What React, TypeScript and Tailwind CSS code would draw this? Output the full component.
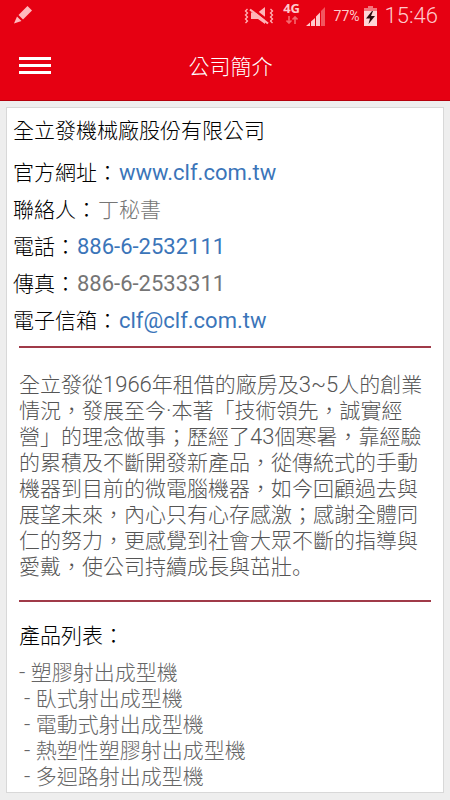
import type { ReactNode } from "react";

const cjk = "font-['Noto_Sans_CJK_TC',sans-serif]";
const latin = "font-[Roboto,'Noto_Sans_CJK_TC',sans-serif]";

const products = [
  "臥式射出成型機",
  "電動式射出成型機",
  "熱塑性塑膠射出成型機",
  "多迴路射出成型機",
];

function Latin({ children }: { children: ReactNode }) {
  return <span className={`${latin} text-[22px] leading-5`}>{children}</span>;
}

function StatusBar() {
  return (
    <div className={`flex h-8 items-center justify-between px-3 ${latin}`}>
      <svg width="22" height="22" viewBox="0 0 22 22" fill="#ffb9bd" aria-hidden="true">
        <path d="M15.500 1 L20 5.500 L11 14.500 L6.500 10 Z" />
        <path d="M5 11.500 L9.500 16 L2 18.500 Z" />
      </svg>
      <div className="flex items-center text-[#ffc9cc]">
        <svg width="30" height="22" viewBox="0 0 30 22" fill="none" stroke="#ffb3b7" aria-hidden="true">
          <path d="M3.500 4 l-2 2 l2 2 l-2 2 l2 2 l-2 2 l2 2 l-2 2" strokeWidth="1.3" />
          <path d="M26.500 4 l2 2 l-2 2 l2 2 l-2 2 l2 2 l-2 2 l2 2" strokeWidth="1.3" />
          <path d="M7 7.500 H14 L21 2 V19 L14 14 H7 Z" fill="#ffb3b7" stroke="none" />
          <path d="M7 2.500 L25 16.500" stroke="#e60012" strokeWidth="2.500" />
          <path d="M6 4.500 L24 18.500" strokeWidth="2.200" />
        </svg>
        <div className="mb-1.5 ml-2 flex w-5 flex-col items-center">
          <span className="font-['Open_Sans',sans-serif] text-[13px] leading-3 font-bold">4G</span>
          <svg className="mt-0.5" width="12" height="8" viewBox="0 0 12 8" stroke="#f4686f" strokeWidth="1.6" fill="none" aria-hidden="true">
            <path d="M3 0 V7 M0.500 4.500 L3 7 L5.500 4.500 M9 8 V1 M6.500 3.500 L9 1 L11.500 3.500" />
          </svg>
        </div>
        <svg className="ml-1" width="20" height="21" viewBox="0 0 20 21" fill="#ffc9cc" aria-hidden="true">
          <path d="M0 20 L4 16.500 V20 Z M5 15.500 L9 12 V20 H5 Z M10 10.500 L14 6.500 V20 H10 Z" />
          <path d="M15 5 L19 1 V20 H15 Z" fill="#f2555e" />
        </svg>
        <span className="ml-2 text-sm font-normal">77%</span>
        <svg className="ml-1" width="13" height="21" viewBox="0 0 13 21" aria-hidden="true">
          <path d="M4 0 H9 V2 H13 V6 H0 V2 H4 Z" fill="#f4757c" />
          <path d="M0 5 H13 V20 H0 Z" fill="#ffd5d7" />
          <path d="M8 5 L2 12.500 H6 L4.500 18 L11 10 H7 L9 5 Z" fill="#2a0a0c" />
        </svg>
        <span className="ml-2 text-[22px] leading-8">15:46</span>
      </div>
    </div>
  );
}

function Field({ label, children }: { label: string; children: ReactNode }) {
  return (
    <div className="flex items-baseline gap-px leading-[37px]">
      <dt className="text-black">{label}：</dt>
      <dd className="text-[#757575]">{children}</dd>
    </div>
  );
}

function Rule() {
  return <hr className="mx-3 h-0 border-t-2 border-[#a03a48]" />;
}

export default function App() {
  return (
    <div className={`min-h-screen bg-[#eeeeee] ${cjk} text-[21px] font-light`}>
      <header className="border-b border-[#b5000c] bg-[#e60012]">
        <StatusBar />
        <div className="flex h-[68px] items-center pr-5 pb-0.5 pl-[19px] text-white">
          <button type="button" aria-label="選單" className="flex w-8 flex-col gap-1">
            <span className="h-[3px] w-full bg-white" />
            <span className="h-[3px] w-full bg-white" />
            <span className="h-[3px] w-full bg-white" />
          </button>
          <h1 className="flex-1 pr-5 text-center leading-8">公司簡介</h1>
        </div>
      </header>

      <main className="p-1.5">
        <section className="border border-[#d8d8d8] bg-white">
          <div className="px-1.5 pb-2">
            <h2 className="mb-[3px] leading-[42px] text-black">全立發機械廠股份有限公司</h2>
            <dl>
              <Field label="官方網址">
                <a href="#web" className="font-normal text-[#3b75b9]"><Latin>www.clf.com.tw</Latin></a>
              </Field>
              <Field label="聯絡人">丁秘書</Field>
              <Field label="電話">
                <a href="#tel" className="font-normal text-[#3b75b9]"><Latin>886-6-2532111</Latin></a>
              </Field>
              <Field label="傳真"><span className="font-normal"><Latin>886-6-2533311</Latin></span></Field>
              <Field label="電子信箱">
                <a href="#mail" className="font-normal text-[#3b75b9]"><Latin>clf@clf.com.tw</Latin></a>
              </Field>
            </dl>
          </div>
          <Rule />
          <p className="px-3 py-[22px] leading-[26px] text-[#555555]">
            全立發從<Latin>1966</Latin>年租借的廠房及<Latin>3~5</Latin>人的創業情況，發展至今<Latin>·</Latin>本著「技術領先，誠實經營」的理念做事；歷經了<Latin>43</Latin>個寒暑，靠經驗的累積及不斷開發新產品，從傳統式的手動機器到目前的微電腦機器，如今回顧過去與展望未來，內心只有心存感激；感謝全體同仁的努力，更感覺到社會大眾不斷的指導與愛戴，使公司持續成長與茁壯<span className="font-['Noto_Sans_CJK_SC',sans-serif] leading-5">。</span>
          </p>
          <Rule />
          <div className="px-3 pt-4 pb-1">
            <h2 className="leading-8 text-black">產品列表：</h2>
            <ul className="mt-2 leading-[26px] text-[#666666]">
              <li><Latin>- </Latin>塑膠射出成型機</li>
              {products.map((name) => (
                <li key={name} className="pl-[5px]"><Latin>- </Latin>{name}</li>
              ))}
            </ul>
          </div>
        </section>
      </main>
    </div>
  );
}
